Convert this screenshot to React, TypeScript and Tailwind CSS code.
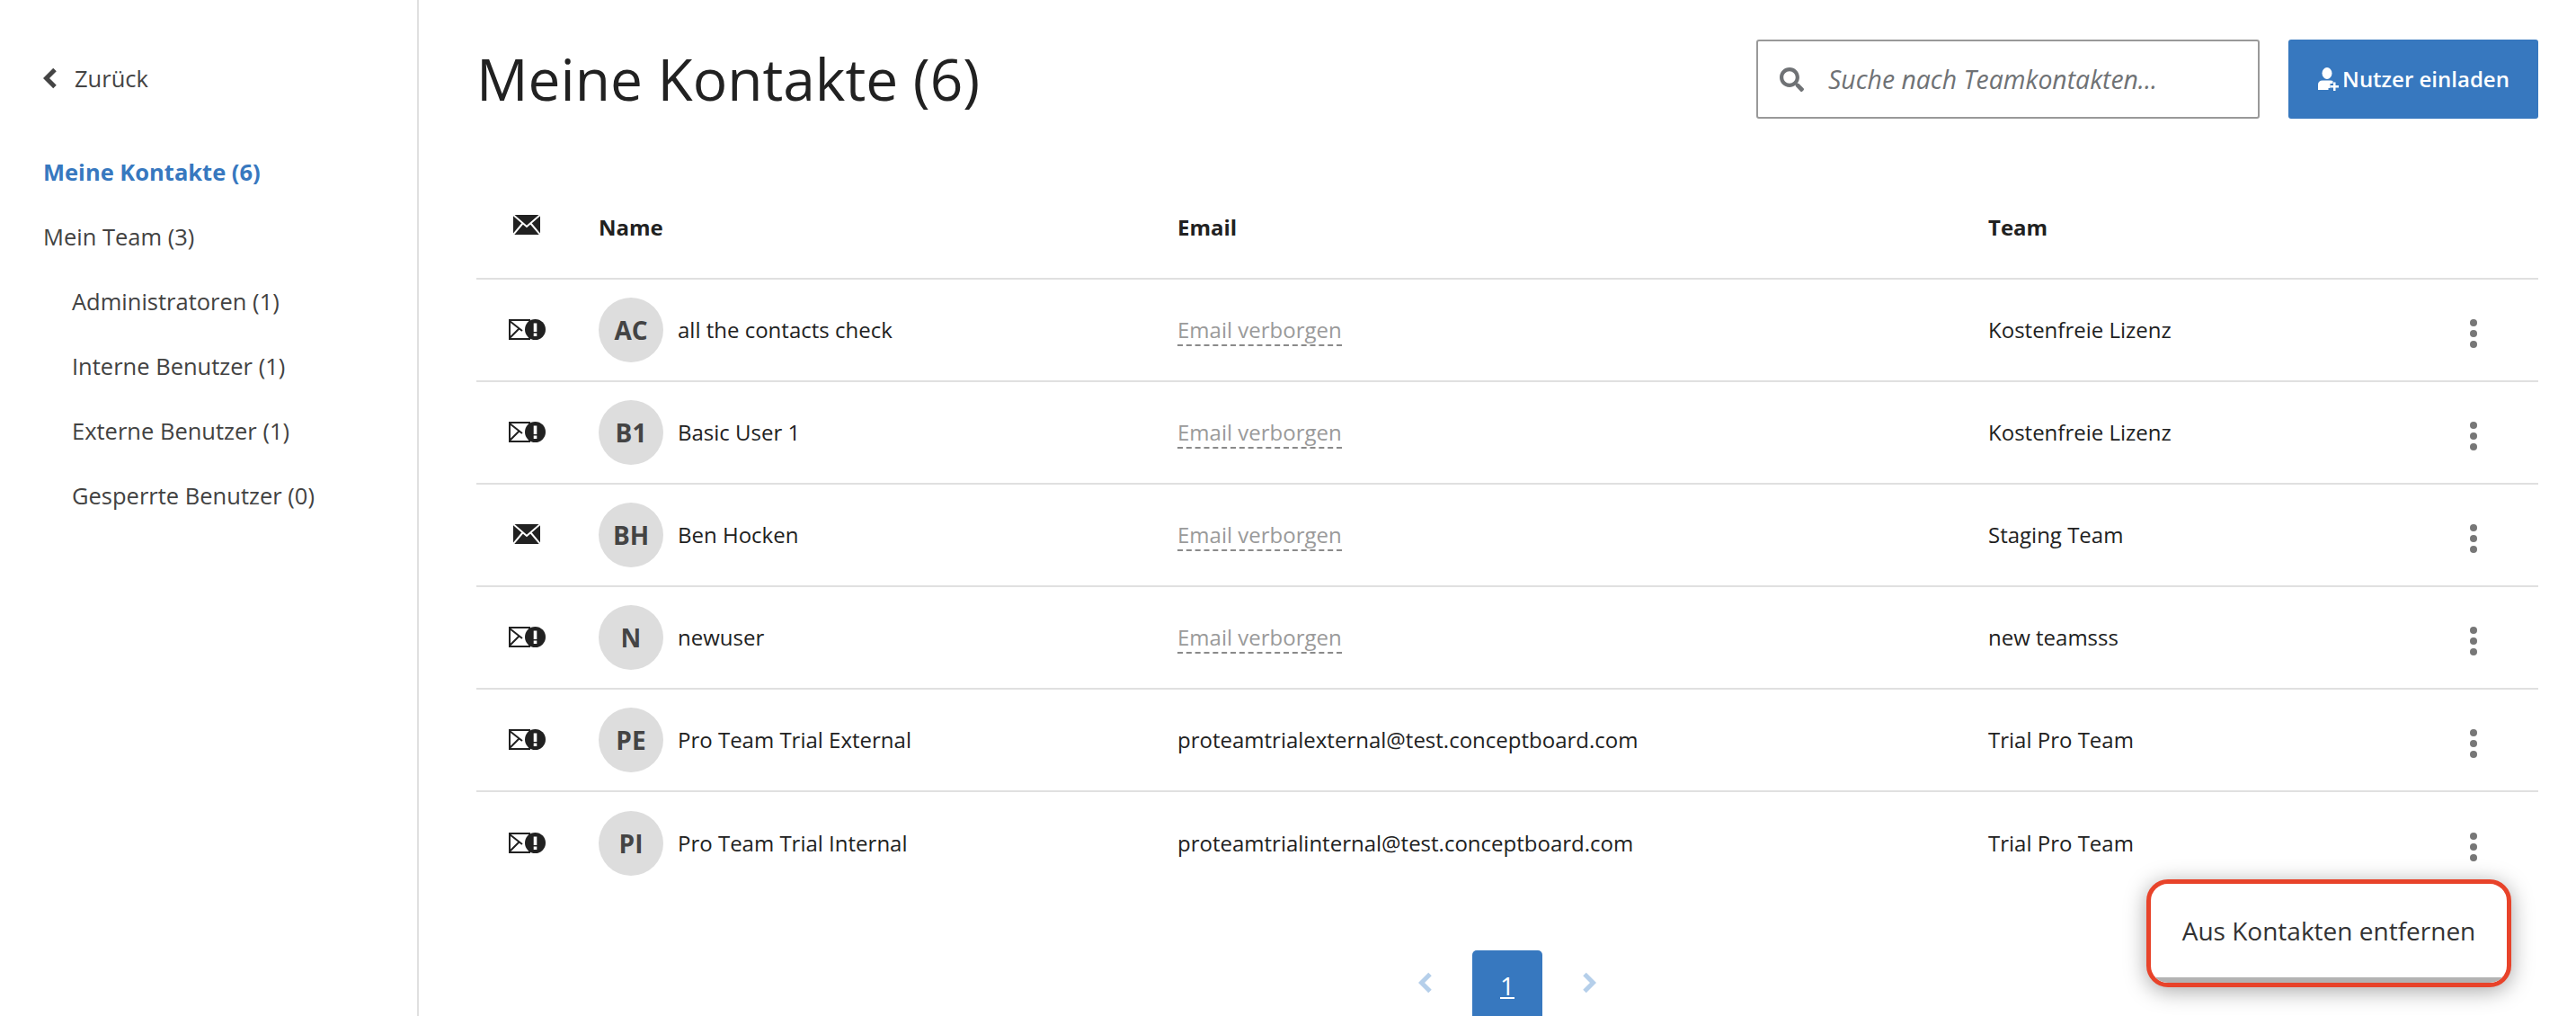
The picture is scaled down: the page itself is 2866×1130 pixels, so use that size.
import { FaSearch } from 'react-icons/fa'

const CONTACTS = [
  { initials: 'AC', name: 'all the contacts check', email: null, team: 'Kostenfreie Lizenz', warn: true },
  { initials: 'B1', name: 'Basic User 1', email: null, team: 'Kostenfreie Lizenz', warn: true },
  { initials: 'BH', name: 'Ben Hocken', email: null, team: 'Staging Team', warn: false },
  { initials: 'N', name: 'newuser', email: null, team: 'new teamsss', warn: true },
  { initials: 'PE', name: 'Pro Team Trial External', email: 'proteamtrialexternal@test.conceptboard.com', team: 'Trial Pro Team', warn: true },
  { initials: 'PI', name: 'Pro Team Trial Internal', email: 'proteamtrialinternal@test.conceptboard.com', team: 'Trial Pro Team', warn: true },
]

const SUB_ITEMS = ['Administratoren (1)', 'Interne Benutzer (1)', 'Externe Benutzer (1)', 'Gesperrte Benutzer (0)']

function Chevron({ dir, className }: { dir: 'left' | 'right'; className?: string }) {
  return (
    <svg width="16" height="24" viewBox="0 0 16 24" className={className}>
      <path d={dir === 'left' ? 'M13 2.500L3.500 12l9.500 9.500' : 'M3 2.500L12.500 12 3 21.500'} fill="none" stroke="currentColor" strokeWidth="5" />
    </svg>
  )
}

function MailSolid() {
  return (
    <svg width="30" height="22" viewBox="0 0 30 22">
      <path d="M0 0h30v22H0z" fill="#212121" />
      <path d="M0 0l15 13L30 0M0 22l10.500-12.500M30 22L19.500 9.500" fill="none" stroke="#fff" strokeWidth="2" />
    </svg>
  )
}

function MailWarn() {
  return (
    <svg width="41" height="23" viewBox="0 0 41 23">
      <path d="M1 1h22v21H1z" fill="#fff" stroke="#212121" strokeWidth="2" />
      <path d="M1 2l14 11M1 21l11-11" fill="none" stroke="#212121" strokeWidth="2" />
      <circle cx="29.500" cy="11.500" r="11.500" fill="#212121" />
      <path d="M27.700 4.500h3.600v9.500h-3.600zM27.700 15.500h3.600v3.400h-3.600z" fill="#fff" />
    </svg>
  )
}

function UserPlus() {
  return (
    <svg width="24" height="26" viewBox="0 0 24 26" fill="#fff">
      <ellipse cx="11" cy="6.500" rx="5.500" ry="6.500" />
      <path d="M1 25v-6c0-3 2-4.500 5-4.500h9c1 0 2 .2 2.500.6V18h-3v5h-2v2z" />
      <path d="M18 16.500h2.500V20H24v2.500h-3.500V26H18v-3.500h-3.500V20H18z" />
    </svg>
  )
}

function Kebab() {
  return (
    <div className="flex flex-col gap-[4px] mt-[8px]">
      <span className="w-[8px] h-[8px] rounded-full bg-[#777777]" />
      <span className="w-[8px] h-[8px] rounded-full bg-[#777777]" />
      <span className="w-[8px] h-[8px] rounded-full bg-[#777777]" />
    </div>
  )
}

export default function App() {
  return (
    <div className="relative flex h-[1130px] w-[2866px] overflow-hidden bg-white font-['Open_Sans',sans-serif] text-[#212121]">
      {/* Sidebar */}
      <aside className="w-[466px] shrink-0 border-r-2 border-[#e0e0e0] pl-[48px] pt-[69px] text-[25.5px] text-[#424242]">
        <div className="flex h-[36px] items-center gap-[19px] text-[#444444]">
          <Chevron dir="left" />
          <span>Zurück</span>
        </div>
        <div className="mt-[50px] flex h-[72px] items-center font-bold text-[#3778bf]">Meine Kontakte (6)</div>
        <div className="flex h-[72px] items-center">Mein Team (3)</div>
        {SUB_ITEMS.map((item) => (
          <div key={item} className="flex h-[72px] items-center pl-[32px]">
            {item}
          </div>
        ))}
      </aside>

      {/* Main */}
      <main className="flex-1 pl-[64px] pr-[42px] pt-[44px]">
        <header className="flex h-[88px] items-center">
          <h1 className="text-[64px] font-normal leading-none">Meine Kontakte (6)</h1>
          <div className="ml-auto flex h-[88px] w-[560px] items-center rounded-[3px] border-2 border-[#999999] pl-[24px] text-[#6f7275]">
            <FaSearch className="h-[27px] w-[27px]" />
            <span className="ml-[27px] text-[28.4px] italic">Suche nach Teamkontakten...</span>
          </div>
          <button className="ml-[32px] flex h-[88px] w-[278px] items-center justify-center gap-[4px] rounded-[3px] bg-[#3778bf] text-[24px] font-semibold text-white">
            <UserPlus />
            Nutzer einladen
          </button>
        </header>

        {/* Table head */}
        <div className="grid h-[179px] grid-cols-[136px_644px_902px_1fr] items-end border-b-2 border-[#e0e0e0] pb-[38px] text-[24px] font-bold">
          <div className="mb-[10px] flex w-[112px] justify-center">
            <MailSolid />
          </div>
          <div>Name</div>
          <div>Email</div>
          <div>Team</div>
        </div>

        {CONTACTS.map((c, i) => (
          <div
            key={c.initials}
            className={`grid h-[114px] grid-cols-[136px_644px_902px_1fr] items-center text-[24px] ${
              i < CONTACTS.length - 1 ? 'border-b-2 border-[#e0e0e0]' : ''
            }`}
          >
            <div className="mb-[2px] flex w-[112px] justify-center">{c.warn ? <MailWarn /> : <MailSolid />}</div>
            <div className="flex items-center gap-[16px]">
              <div className="flex h-[72px] w-[72px] items-center justify-center rounded-full bg-[#dddddd] text-[28px] font-bold text-[#444444]">
                {c.initials}
              </div>
              <span>{c.name}</span>
            </div>
            <div>
              {c.email ?? (
                <span className="border-b-2 border-dashed border-[#8a8a8a] text-[#9a9a9a]">Email verborgen</span>
              )}
            </div>
            <div className="flex items-center justify-between pr-[68px]">
              <span>{c.team}</span>
              <Kebab />
            </div>
          </div>
        ))}

        {/* Pagination */}
        <div className="mt-[62px] flex items-center justify-center gap-[44px] text-[#b5cfea]">
          <Chevron dir="left" className="mb-[6px]" />
          <div className="flex h-[78px] w-[78px] items-center justify-center rounded-[5px] bg-[#3778bf] text-[28px] text-white underline">
            1
          </div>
          <Chevron dir="right" className="mb-[6px]" />
        </div>
      </main>

      {/* Row menu */}
      <div className="absolute left-[2388px] top-[978px] flex h-[120px] w-[406px] flex-col overflow-hidden rounded-[24px] border-[5px] border-[#e8432a] bg-white shadow-[0_4px_24px_rgba(0,0,0,0.35)]">
        <div className="flex flex-1 items-center justify-center text-[28px] text-[#333333]">Aus Kontakten entfernen</div>
        <div className="h-[6px] bg-[#b3b3b3]" />
      </div>
    </div>
  )
}
